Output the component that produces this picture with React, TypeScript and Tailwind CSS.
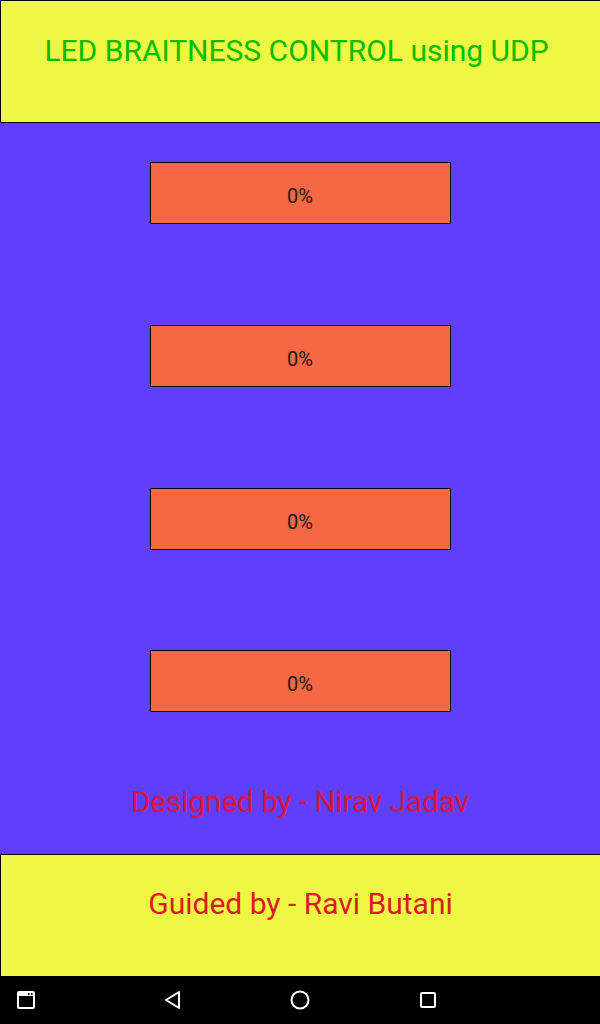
import React from "react";

const Bar = ({ mt }: { mt: string }) => (
  <div className={`${mt} w-[301px] h-[62px] bg-[#f66843] border border-black flex items-center justify-center pt-[5px]`}>
    <span className="text-[20px] text-[#1a1a1a]">0%</span>
  </div>
);

export default function App() {
  return (
    <div className="w-[600px] h-[1024px] flex flex-col overflow-hidden" style={{ fontFamily: "Roboto, 'Noto Sans', sans-serif" }}>
      <div className="h-[123px] bg-[#eef743] border-t border-l border-b border-black flex justify-center pt-[30px] shrink-0">
        <span className="text-[30px] text-[#00be00] leading-[40px] ml-[-8px]">LED BRAITNESS CONTROL using UDP</span>
      </div>
      <div className="h-[731px] bg-[#613ef9] flex flex-col items-center shrink-0">
        <Bar mt="mt-[39px]" />
        <Bar mt="mt-[101px]" />
        <Bar mt="mt-[101px]" />
        <Bar mt="mt-[100px]" />
        <span className="mt-[70px] text-[29.6px] leading-[40px] text-[#dc143c]">Designed by - Nirav Jadav</span>
      </div>
      <div className="h-[122px] bg-[#eef743] border-t border-l border-black flex justify-center pt-[29px] shrink-0">
        <span className="text-[30px] leading-[40px] text-[#dd1a22]">Guided by - Ravi Butani</span>
      </div>
      <div className="h-[48px] bg-black flex items-center shrink-0 relative">
        <svg className="ml-[17px]" width="18" height="18" viewBox="0 0 18 18">
          <rect x="1" y="1" width="16" height="16" rx="1" fill="none" stroke="white" strokeWidth="2" />
          <rect x="1" y="1" width="16" height="4" fill="white" />
          <rect x="11" y="2" width="1.5" height="2" fill="black" />
          <rect x="14" y="2" width="1.5" height="2" fill="black" />
        </svg>
        <svg className="ml-[128px]" width="18" height="20" viewBox="0 0 18 20">
          <path d="M16 2 L3 10 L16 18 Z" fill="none" stroke="white" strokeWidth="2" strokeLinejoin="round" />
        </svg>
        <svg className="ml-[109px]" width="20" height="20" viewBox="0 0 20 20">
          <circle cx="10" cy="10" r="8.5" fill="none" stroke="white" strokeWidth="2" />
        </svg>
        <svg className="ml-[109px]" width="18" height="18" viewBox="0 0 18 18">
          <rect x="2" y="2" width="14" height="14" rx="1" fill="none" stroke="white" strokeWidth="2" />
        </svg>
      </div>
    </div>
  );
}
